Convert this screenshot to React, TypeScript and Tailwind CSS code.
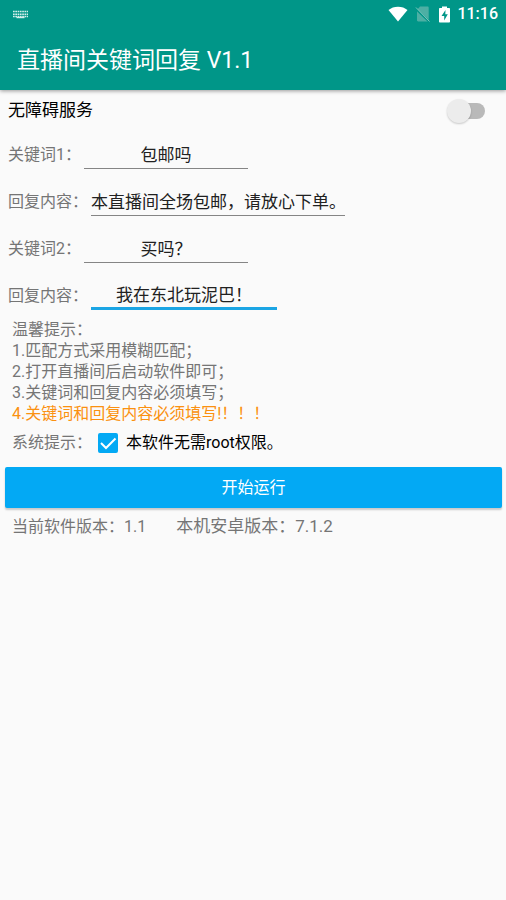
import { useState } from 'react'

const fields = [
  { id: 'keyword1', label: '关键词1：', value: '包邮吗', className: 'w-[164px] border-b border-[#858585]' },
  { id: 'reply1', label: '回复内容：', value: '本直播间全场包邮，请放心下单。', className: 'w-[254px] border-b border-[#858585]' },
  { id: 'keyword2', label: '关键词2：', value: '买吗？', className: 'w-[164px] border-b border-[#858585]' },
  { id: 'reply2', label: '回复内容：', value: '我在东北玩泥巴！', className: 'w-[186px] border-b-3 border-[#1ba5e4]' },
]

const tips = [
  '1.匹配方式采用模糊匹配；',
  '2.打开直播间后启动软件即可；',
  '3.关键词和回复内容必须填写；',
]

export default function App() {
  return (
    <div className="min-h-screen bg-[#fafafa] font-['Roboto','Noto_Sans_CJK_SC',sans-serif] text-base text-[#757575]">
      <Header />
      <main>
        <ServiceSwitch />
        {fields.map((field) => (
          <FieldRow key={field.id} {...field} />
        ))}

        <div className="px-3 leading-[21px]">
          <p>温馨提示：</p>
          {tips.map((tip) => (
            <p key={tip}>{tip}</p>
          ))}
          <p className="text-[#fb9110]">4.关键词和回复内容必须填写!！！！</p>
        </div>

        <SystemNotice />

        <div className="pt-[5px] pr-1 pl-[5px]">
          <button
            type="button"
            className="block h-[41px] w-full rounded-xs bg-[#03a9f4] text-white shadow-[0_2px_2px_rgba(0,0,0,0.2)]"
          >
            开始运行
          </button>
        </div>

        <footer className="flex h-[38px] items-center gap-[30px] px-3">
          <span>当前软件版本：1.1</span>
          <span className="text-[17px]">本机安卓版本：7.1.2</span>
        </footer>
      </main>
    </div>
  )
}

function Header() {
  return (
    <header className="bg-[#009688] text-white shadow-[0_1px_4px_rgba(0,0,0,0.4)]">
      <div className="flex h-7 items-center pr-2 pl-3">
        <KeyboardIcon />
        <div className="ml-auto flex items-center gap-[7px]">
          <WifiIcon />
          <NoSimIcon />
          <BatteryIcon />
          <span className="font-medium">11:16</span>
        </div>
      </div>
      <h1 className="flex h-[62px] items-center px-[17px] pt-1 text-[23px]">直播间关键词回复 V1.1</h1>
    </header>
  )
}

function ServiceSwitch() {
  const [on, setOn] = useState(false)

  return (
    <div className="flex h-[41px] items-center justify-between pr-[21px] pl-2">
      <label htmlFor="service" className="text-[17px] text-black">
        无障碍服务
      </label>
      <input
        id="service"
        type="checkbox"
        role="switch"
        checked={on}
        onChange={(e) => setOn(e.target.checked)}
        className="relative h-4 w-[34px] appearance-none rounded-full bg-[#b9b9b9] before:absolute before:-top-1 before:-left-1 before:size-6 before:rounded-full before:bg-[#ececec] before:shadow-[0_1px_2px_rgba(0,0,0,0.2)] checked:bg-[#8fd6f7] checked:before:left-4 checked:before:bg-[#03a9f4]"
      />
    </div>
  )
}

function FieldRow({ id, label, value, className }: { id: string, label: string, value: string, className: string }) {
  return (
    <div className="flex h-[47px] items-center gap-[3px] px-2">
      <label htmlFor={id}>{label}</label>
      <input
        id={id}
        type="text"
        defaultValue={value}
        className={`h-7 bg-transparent pb-0.5 text-center text-[17px] text-[#212121] outline-none ${className}`}
      />
    </div>
  )
}

function SystemNotice() {
  const [checked, setChecked] = useState(true)

  return (
    <div className="flex h-[38px] items-center px-3">
      <span>系统提示：</span>
      <label className="ml-1.5 flex items-center gap-2 text-black">
        <span className="relative size-5">
          <input
            type="checkbox"
            checked={checked}
            onChange={(e) => setChecked(e.target.checked)}
            className="block size-5 appearance-none rounded-xs border-2 border-[#757575] checked:border-[#03a9f4] checked:bg-[#03a9f4]"
          />
          {checked && (
            <svg viewBox="0 0 20 20" className="pointer-events-none absolute inset-0 size-5" fill="none" stroke="white" strokeWidth="2">
              <path d="M3 10l5 5L17.5 5.5" />
            </svg>
          )}
        </span>
        本软件无需root权限。
      </label>
    </div>
  )
}

function KeyboardIcon() {
  return (
    <svg width="17" height="9" viewBox="0 0 17 9" fill="none" stroke="#d3efeb" strokeWidth="1.6">
      <path d="M1 1.5h15M1 4.2h15" strokeDasharray="1.7 .6" />
      <path d="M1 6.5h15" strokeDasharray="1.7 .6" />
      <path d="M4.5 7.5h8" strokeWidth="1.4" />
    </svg>
  )
}

function WifiIcon() {
  return (
    <svg width="20" height="16" viewBox="0 0 20 16" fill="white">
      <path d="M10 15.5L.5 4C3 1.9 6.3 .7 10 .7s7 1.2 9.5 3.3z" />
    </svg>
  )
}

function NoSimIcon() {
  return (
    <svg width="15" height="16" viewBox="0 0 15 16">
      <path d="M5 .5h7.5c.8 0 1.200.5 1.200 1.200v12.600c0 .7-.4 1.200-1.200 1.200H3.200c-.8 0-1.200-.5-1.200-1.200V4z" fill="#4dafa4" />
      <path d="M.5 2.500l13.500 13" stroke="#009688" strokeWidth="2" />
      <path d="M1 1.500l13.500 14" stroke="#80c7bf" strokeWidth="1" />
    </svg>
  )
}

function BatteryIcon() {
  return (
    <svg width="11" height="17" viewBox="1 0 11 17" className="ml-0.5">
      <path d="M4 .5h5v1.500h2.200c.5 0 .8.3.8.8v12.900c0 .5-.3.8-.8.8H1.800c-.5 0-.8-.3-.8-.8V2.800c0-.5.3-.8.8-.8H4z" fill="white" />
      <path d="M7.500 4L3.500 10h2.700v4.500L9.800 8.300H7.300z" fill="#009688" />
    </svg>
  )
}
